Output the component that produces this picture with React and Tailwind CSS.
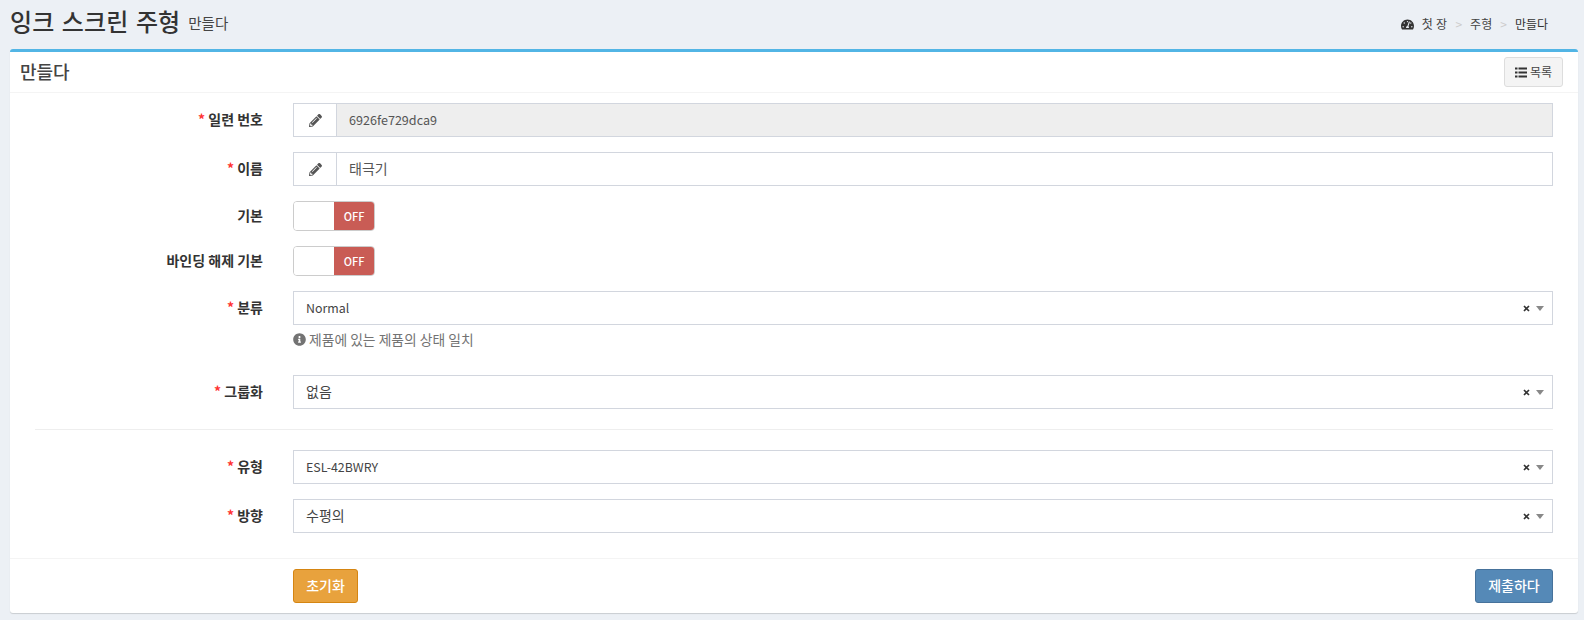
import React from 'react';
import { FaPencilAlt, FaTachometerAlt, FaInfoCircle } from 'react-icons/fa';

const fontStack = { fontFamily: '"Noto Sans CJK KR", "Noto Sans", sans-serif' };

const Label = ({ required, children }) => (
  <label className="w-[253px] shrink-0 pb-[2px] text-right text-[14px] font-bold leading-[20px] text-[#333]">
    {required && <span className="font-bold text-[#f33]">* </span>}
    {children}
  </label>
);

const Row = ({ label, required, children, className = 'mb-[15px]' }) => (
  <div className={`flex items-center ${className}`}>
    <Label required={required}>{label}</Label>
    <div className="ml-[30px] min-w-0 flex-1">{children}</div>
  </div>
);

const PencilInput = ({ value, disabled, small }) => (
  <div className="flex h-[34px] border border-[#d2d6de]">
    <span className="flex w-[43px] shrink-0 items-center justify-center border-r border-[#d2d6de] bg-white text-[#555]">
      <FaPencilAlt className="text-[13px]" />
    </span>
    <div className={`flex flex-1 items-center px-[12px] text-[#555] ${small ? 'text-[12.6px]' : 'pb-[2px] text-[14px]'} ${disabled ? 'bg-[#eee]' : 'bg-white'}`}>
      {value}
    </div>
  </div>
);

const Toggle = () => (
  <div className="flex h-[30px] w-[82px] overflow-hidden rounded-[4px] border border-[#ccc]">
    <span className="w-[40px] bg-white" />
    <span className="flex flex-1 items-center justify-center bg-[#c95c55] text-[11px] font-medium text-white">OFF</span>
  </div>
);

const Select = ({ value, small }) => (
  <div className={`flex h-[34px] items-center justify-between border border-[#d2d6de] bg-white pl-[12px] pr-[8px] text-[#444] ${small ? 'text-[12.4px]' : 'text-[14px]'}`}>
    <span className={small ? '' : 'pb-[2px]'}>{value}</span>
    <span className="flex items-center gap-[6px]">
      <svg width="7" height="7" viewBox="0 0 7 7" className="text-[#333]">
        <path d="M1 1l5 5M6 1l-5 5" stroke="currentColor" strokeWidth="1.7" />
      </svg>
      <span className="h-0 w-0 border-x-[4px] border-t-[5px] border-x-transparent border-t-[#888]" />
    </span>
  </div>
);

export default function App() {
  return (
    <div style={fontStack} className="h-[620px] overflow-hidden bg-[#ecf0f5] pl-[10px] pr-[6px]">
      <div className="flex h-[49px] items-start justify-between">
        <div className="flex items-center pt-[3px]">
          <h1 className="text-[24px] font-medium leading-[36px] tracking-[0.1px] text-[#333] [word-spacing:2px]">잉크 스크린 주형</h1>
          <small className="ml-[8px] mt-[3px] text-[14.5px] text-[#444]">만들다</small>
        </div>
        <div className="mr-[30px] flex items-center pt-[15px] text-[12px] leading-[18px] text-[#444]">
          <FaTachometerAlt className="mr-[8px] text-[13px] text-[#333]" />
          <span className="tracking-[0.3px]">첫 장</span>
          <span className="mx-[8px] text-[#ccc]">&gt;</span>
          <span>주형</span>
          <span className="mx-[8px] text-[#ccc]">&gt;</span>
          <span className="text-[#333]">만들다</span>
        </div>
      </div>

      <div className="h-[564px] rounded-[3px] border-t-[3px] border-[#52b5e5] bg-white shadow-[0_1px_1px_rgba(0,0,0,0.15)]">
        <div className="flex h-[41px] items-center justify-between border-b border-[#f4f4f4] pl-[10px] pr-[15px]">
          <h3 className="pb-[3px] text-[18px] font-medium leading-none text-[#444]">만들다</h3>
          <button className="flex h-[30px] w-[59px] items-center justify-center gap-[3px] rounded-[3px] border border-[#ddd] bg-[#f4f4f4] text-[12px] text-[#444]">
            <svg width="12" height="11" viewBox="0 0 12 11" fill="currentColor" className="text-[#333]">
              <path d="M0 .5h2.5v2H0zM3.5.5H12v2H3.5zM0 4.5h2.5v2H0zM3.5 4.5H12v2H3.5zM0 8.5h2.5v2H0zM3.5 8.5H12v2H3.5z" />
            </svg>
            목록
          </button>
        </div>

        <div className="pr-[25px] pt-[10px]">
          <Row label="일련 번호" required>
            <PencilInput value="6926fe729dca9" disabled small />
          </Row>
          <Row label="이름" required>
            <PencilInput value="태극기" />
          </Row>
          <Row label="기본">
            <Toggle />
          </Row>
          <Row label="바인딩 해제 기본">
            <Toggle />
          </Row>
          <Row label="분류" required className="mb-[5px]">
            <Select value="Normal" small />
          </Row>
          <div className="mb-[25px] ml-[283px] flex h-[20px] items-center gap-[3px] pb-[1px] text-[13.8px] text-[#737373]">
            <FaInfoCircle className="text-[13px]" />
            제품에 있는 제품의 상태 일치
          </div>
          <Row label="그룹화" required className="mb-[20px]">
            <Select value="없음" />
          </Row>
          <div className="mb-[20px] ml-[25px] border-t border-[#eee]" />
          <Row label="유형" required>
            <Select value="ESL-42BWRY" small />
          </Row>
          <Row label="방향" required className="mb-0">
            <Select value="수평의" />
          </Row>
        </div>

        <div className="mt-[25px] flex justify-between border-t border-[#f4f4f4] pl-[283px] pr-[25px] pt-[10px]">
          <button className="h-[34px] w-[65px] rounded-[3px] border border-[#d58512] bg-[#e8a23d] pb-[2px] text-[14px] font-medium text-white">초기화</button>
          <button className="h-[34px] w-[78px] rounded-[3px] border border-[#46729b] bg-[#5589b7] pb-[2px] text-[14px] font-medium text-white">제출하다</button>
        </div>
      </div>
    </div>
  );
}
